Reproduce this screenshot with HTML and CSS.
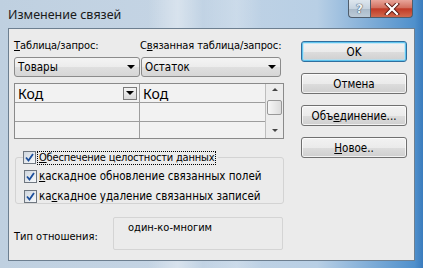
FILE: index.html
```html
<!DOCTYPE html>
<html lang="ru">
<head>
<meta charset="utf-8">
<link rel="stylesheet" href="styles.css">
</head>
<body>
<div class="window">
  <div class="titlebar">
    <span class="title">Изменение связей</span>
    <div class="caption-buttons">
      <div class="cap-btn help">?</div>
      <div class="cap-btn close">
        <svg width="16" height="12" viewBox="0 0 16 12"><path d="M3 1 L13 11 M13 1 L3 11" stroke="#5a1a14" stroke-width="4" stroke-linecap="square"/><path d="M3 1 L13 11 M13 1 L3 11" stroke="#fff" stroke-width="2.2" stroke-linecap="square"/></svg>
      </div>
    </div>
  </div>
  <div class="client">
    <div class="main">
      <div class="labels">
        <span class="lbl"><u>Т</u>аблица/запрос:</span>
        <span class="lbl">С<u>в</u>язанная таблица/запрос:</span>
      </div>
      <div class="combos">
        <div class="combo combo-left"><span>Товары</span><span class="arrow"></span></div>
        <div class="combo combo-right"><span>Остаток</span><span class="arrow"></span></div>
      </div>
      <div class="grid">
        <div class="grid-cols">
          <div class="col col1">
            <div class="cell head"><span>Код</span><span class="cell-drop"><span class="arrow"></span></span></div>
            <div class="cell"></div>
            <div class="cell last"></div>
          </div>
          <div class="col col2">
            <div class="cell head"><span>Код</span></div>
            <div class="cell"></div>
            <div class="cell last"></div>
          </div>
        </div>
        <div class="scrollbar">
          <span class="sb-arrow up"></span>
          <span class="thumb"></span>
          <span class="sb-arrow down"></span>
        </div>
      </div>
      <fieldset class="group">
        <legend class="legend">
          <span class="check"><svg width="9" height="9" viewBox="0 0 9 9"><path d="M1 4.5 L3.5 7.5 L8 1" fill="none" stroke="#1c4f9c" stroke-width="1.8"/></svg></span>
          <span class="focus"><u>О</u>беспечение целостности данных</span>
        </legend>
        <div class="chk-row">
          <span class="check"><svg width="9" height="9" viewBox="0 0 9 9"><path d="M1 4.5 L3.5 7.5 L8 1" fill="none" stroke="#1c4f9c" stroke-width="1.8"/></svg></span>
          <span><u>к</u>аскадное обновление связанных полей</span>
        </div>
        <div class="chk-row">
          <span class="check"><svg width="9" height="9" viewBox="0 0 9 9"><path d="M1 4.5 L3.5 7.5 L8 1" fill="none" stroke="#1c4f9c" stroke-width="1.8"/></svg></span>
          <span>ка<u>с</u>кадное удаление связанных записей</span>
        </div>
      </fieldset>
      <div class="type-row">
        <span class="type-label">Тип отношения:</span>
        <div class="type-box">один-ко-многим</div>
      </div>
    </div>
    <div class="buttons">
      <div class="btn default">OK</div>
      <div class="btn">Отмена</div>
      <div class="btn">Объ<u>е</u>динение...</div>
      <div class="btn"><u>Н</u>овое..</div>
    </div>
  </div>
</div>
</body>
</html>
```
FILE: styles.css
```css
* { box-sizing: border-box; }
html, body { margin: 0; padding: 0; }
body {
  width: 423px;
  height: 268px;
  overflow: hidden;
  background: #4d88c0;
}
.window {
  width: 423px;
  height: 268px;
  display: flex;
  flex-direction: column;
  background:
    linear-gradient(90deg, rgba(255,255,255,0) 0%, rgba(255,255,255,0) 35%, rgba(255,255,255,0.35) 42%, rgba(255,255,255,0) 48%, rgba(255,255,255,0.2) 56%, rgba(255,255,255,0) 62%),
    linear-gradient(90deg, #bfd0e0 0%, #c4d4e4 40%, #b8cfe5 75%, #4f90cc 98%, #3b7cbd 100%);
  font-family: "DejaVu Sans Condensed", "DejaVu Sans", sans-serif;
  font-size: 11px;
  color: #000;
}
.titlebar {
  height: 28px;
  display: flex;
  align-items: flex-start;
  padding-left: 8px;
}
.title {
  font-family: "Noto Sans", sans-serif;
  font-size: 12.5px;
  color: #1a1a1a;
  margin-top: 6px;
}
.caption-buttons {
  margin-left: auto;
  margin-right: 10px;
  display: flex;
}
.cap-btn {
  height: 18px;
  border: 1px solid #4f5d6c;
  border-top: none;
  display: flex;
  align-items: center;
  justify-content: center;
}
.help {
  width: 22px;
  border-radius: 0 0 0 4px;
  border-right: none;
  background: linear-gradient(180deg, #dde6ee 0%, #c6d3df 50%, #a9b9c8 51%, #bccbd8 100%);
  font-family: "DejaVu Sans", sans-serif;
  font-size: 12px;
  font-weight: bold;
  color: #eef3f8;
  text-shadow: 0 0 1px #2e3d4c, 0 0 1px #2e3d4c;
}
.close {
  width: 43px;
  border-radius: 0 0 4px 0;
  background: linear-gradient(180deg, #e8a59a 0%, #d2705f 45%, #c13a26 52%, #d06a4f 100%);
}
.client {
  flex: 1;
  margin: 0 8px 7px 8px;
  border: 1px solid #6d7f90;
  background: #ebebeb;
  display: flex;
}
.main {
  width: 281px;
  padding-left: 5px;
  display: flex;
  flex-direction: column;
}
.labels {
  display: grid;
  grid-template-columns: 126px 1fr;
  height: 14px;
  margin-top: 9px;
  align-items: center;
}
.lbl { white-space: nowrap; letter-spacing: -0.1px; }
.combos {
  display: grid;
  grid-template-columns: 126px 140px;
  gap: 1px;
  margin-top: 5px;
  height: 20px;
}
.combo {
  border: 1px solid #8b8b8b;
  border-radius: 3px;
  background: linear-gradient(180deg, #f4f4f4 0%, #ececec 50%, #dfdfdf 51%, #d6d6d6 100%);
  display: flex;
  align-items: center;
  padding-left: 3px;
  padding-right: 4px;
  font-size: 11.5px;
}
.combo span:first-child { flex: 1; }
.arrow {
  width: 0;
  height: 0;
  border-left: 4px solid transparent;
  border-right: 4px solid transparent;
  border-top: 4px solid #000;
}
.grid {
  margin-top: 6px;
  height: 56px;
  width: 270px;
  border: 1px solid #8a8a8a;
  background: #f2f2f2;
  display: flex;
}
.grid-cols { display: flex; flex: 1; }
.col { display: flex; flex-direction: column; }
.col1 { width: 125px; border-right: 1px solid #9d9d9d; }
.col2 { flex: 1; }
.cell {
  height: 19px;
  border-bottom: 1px solid #9d9d9d;
  display: flex;
  align-items: center;
  padding-left: 3px;
}
.cell.last { border-bottom: none; flex: 1; }
.cell.head {
  font-family: "Noto Sans", sans-serif;
  font-size: 14px;
  justify-content: space-between;
}
.cell-drop {
  width: 14px;
  height: 13px;
  border: 1px solid #7a7a7a;
  background: linear-gradient(180deg, #f4f4f4, #d8d8d8);
  display: flex;
  align-items: center;
  justify-content: center;
  margin-right: 2px;
}
.scrollbar {
  width: 18px;
  border-left: 1px solid #bdbdbd;
  background: #ececec;
  display: flex;
  flex-direction: column;
  align-items: center;
  padding: 4px 0 4px;
}
.sb-arrow {
  width: 0; height: 0;
  border-left: 3px solid transparent;
  border-right: 3px solid transparent;
}
.sb-arrow.up { border-bottom: 3px solid #444; }
.sb-arrow.down { border-top: 3px solid #444; margin-top: auto; margin-bottom: 2px; }
.thumb {
  width: 15px;
  height: 15px;
  margin-top: 9px;
  border: 1px solid #989898;
  border-radius: 2px;
  background: linear-gradient(90deg, #f6f6f6, #dcdcdc);
}
.group {
  margin: 12px 0 0 1px;
  width: 269px;
  height: 53px;
  border: 1px solid #d3d3d3;
  border-radius: 3px;
  padding: 0 0 0 7px;
  font-size: 11.5px;
}
.legend {
  padding: 0 3px 0 0;
  display: flex;
  align-items: center;
  height: 13px;
  font-size: 11px;
}
.check {
  width: 13px;
  height: 13px;
  border: 1px solid #6f7780;
  background: linear-gradient(135deg, #cfd6de, #f7f9fb);
  display: inline-flex;
  align-items: center;
  justify-content: center;
  margin-right: 2px;
  flex: none;
}
.focus {
  outline: 1px dotted #000;
  outline-offset: 0;
  padding: 0 1px;
  line-height: 12px;
  letter-spacing: -0.2px;
}
.chk-row {
  display: flex;
  align-items: center;
  height: 20px;
  padding-left: 1px;
}
.chk-row .check { margin-right: 2px; }
.chk-row:first-of-type { margin-top: 2px; }
.type-row {
  margin-top: 13px;
  display: flex;
  align-items: flex-start;
}
.type-label { width: 99px; margin-top: 13px; }
.type-box {
  width: 170px;
  height: 33px;
  border: 1px solid #d4d4d4;
  border-radius: 2px;
  padding: 3px 0 0 14px;
}
.buttons {
  margin-left: 11px;
  padding-top: 12px;
  display: flex;
  flex-direction: column;
  gap: 11px;
  font-size: 11.5px;
}
.btn {
  width: 106px;
  height: 21px;
  border: 1px solid #707070;
  border-radius: 3px;
  background: linear-gradient(180deg, #f2f2f2 0%, #ebebeb 50%, #dddddd 51%, #cfcfcf 100%);
  display: flex;
  align-items: center;
  justify-content: center;
  box-shadow: inset 0 0 0 1px rgba(255,255,255,0.7);
}
.btn.default {
  border-color: #2f6f9f;
  box-shadow: inset 0 0 0 1px #5fc4ee, inset 0 0 0 2px rgba(170,225,248,0.6);
}
```
